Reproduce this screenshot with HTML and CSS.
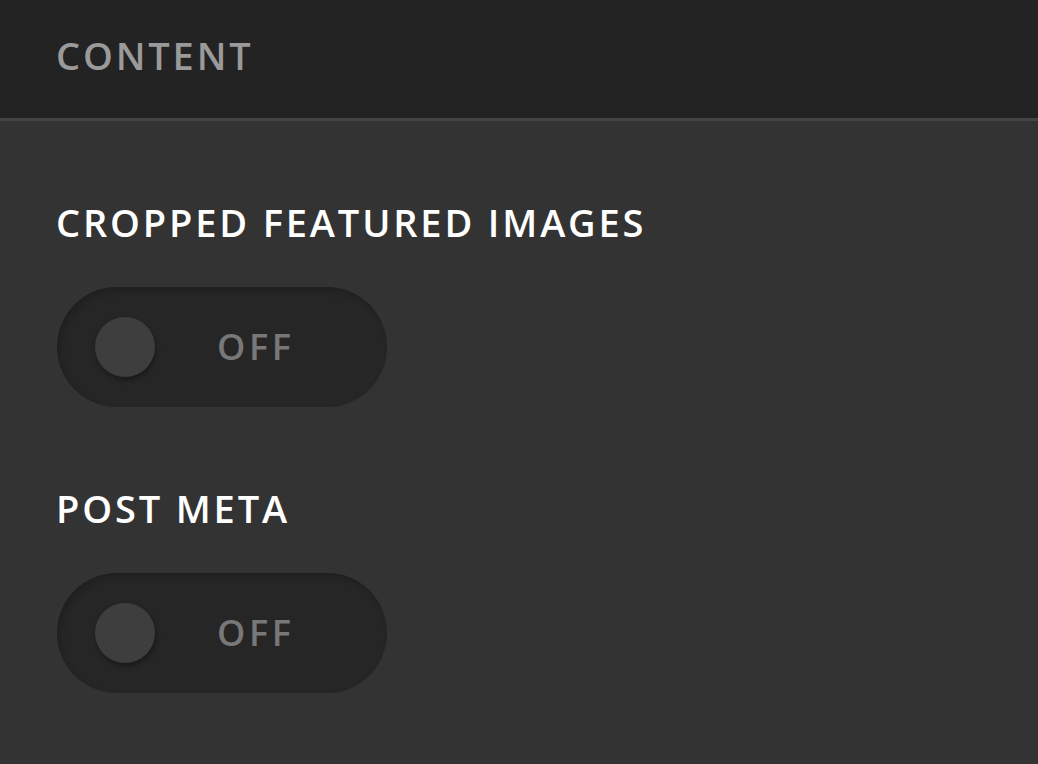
FILE: index.html
```html
<!DOCTYPE html>
<html>
<head>
<meta charset="utf-8">
<link rel="stylesheet" href="styles.css">
</head>
<body>
<header class="header"><h1 class="header-title">CONTENT</h1></header>
<main class="panel">
  <section class="setting">
    <h2 class="setting-label">CROPPED FEATURED IMAGES</h2>
    <div class="toggle"><span class="knob"></span><span class="toggle-text">OFF</span></div>
  </section>
  <section class="setting">
    <h2 class="setting-label">POST META</h2>
    <div class="toggle"><span class="knob"></span><span class="toggle-text">OFF</span></div>
  </section>
</main>
</body>
</html>
```
FILE: styles.css
```css
html, body { margin: 0; padding: 0; }
body {
  background: #333333;
  font-family: "Open Sans", "Noto Sans", sans-serif;
  width: 1038px;
  height: 764px;
  overflow: hidden;
}
.header {
  background: #232323;
  height: 118px;
  border-bottom: 3px solid #444444;
  display: flex;
  align-items: center;
  padding-left: 56px;
}
.header-title {
  margin: 0;
  font-size: 38px;
  font-weight: 600;
  letter-spacing: 0.075em;
  color: #9a9a9a;
  line-height: 1;
  margin-top: -8px;
}
.panel {
  padding: 82px 0 0 56px;
  display: flex;
  flex-direction: column;
  gap: 82px;
}
.setting {
  display: flex;
  flex-direction: column;
  gap: 46px;
}
.setting-label {
  margin: 0;
  font-size: 38px;
  font-weight: 600;
  letter-spacing: 0.075em;
  color: #ffffff;
  line-height: 1;
}
.toggle {
  width: 330px;
  height: 120px;
  border-radius: 60px;
  background: #262626;
  box-shadow: inset 3px 4px 6px rgba(0,0,0,0.18);
  display: flex;
  align-items: center;
  box-sizing: border-box;
  padding-left: 38px;
  margin-left: 1px;
}
.knob {
  width: 60px;
  height: 60px;
  border-radius: 50%;
  background: #3e3e3e;
  box-shadow: 1px 3px 5px rgba(0,0,0,0.35);
}
.toggle-text {
  margin-left: 62px;
  font-size: 36px;
  font-weight: 600;
  letter-spacing: 0.1em;
  color: #787878;
  line-height: 1;
}
```
